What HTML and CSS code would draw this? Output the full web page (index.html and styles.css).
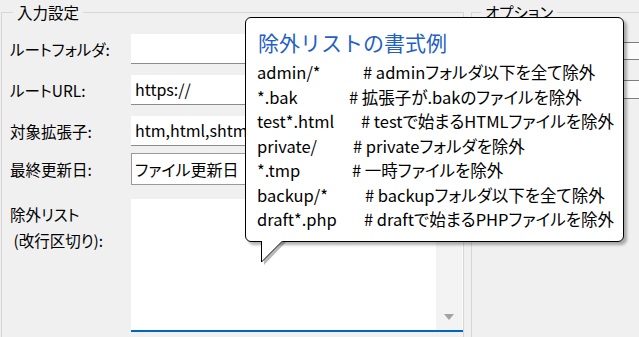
FILE: index.html
```html
<!DOCTYPE html>
<html lang="ja">
<head>
<meta charset="utf-8">
<title>入力設定</title>
<link rel="stylesheet" href="styles.css">
</head>
<body>
<div class="window">
  <fieldset class="group main">
    <legend>入力設定</legend>
    <div class="form">
      <div class="row r1"><div class="label">ルートフォルダ:</div><div class="field"></div></div>
      <div class="row r2"><div class="label">ルートURL:</div><div class="field">https://</div></div>
      <div class="row r3"><div class="label">対象拡張子:</div><div class="field">htm,html,shtml,php</div></div>
      <div class="row r4"><div class="label">最終更新日:</div><div class="combo">ファイル更新日</div></div>
      <div class="row r5">
        <div class="label multi">除外リスト<br>&nbsp;(改行区切り):</div>
        <div class="textarea">
          <div class="ta-body"></div>
          <div class="ta-scroll"><span class="arrow"></span></div>
        </div>
      </div>
    </div>
  </fieldset>
  <fieldset class="group opt">
    <legend>オプション</legend>
    <div class="opt-box first"></div>
    <div class="opt-box"></div>
  </fieldset>

  <div class="tooltip">
    <div class="tip-title">除外リストの書式例</div>
    <div class="tip-line"><span class="code w1">admin/*</span><span># adminフォルダ以下を全て除外</span></div>
    <div class="tip-line"><span class="code w2">*.bak</span><span># 拡張子が.bakのファイルを除外</span></div>
    <div class="tip-line"><span class="code w3">test*.html</span><span># testで始まるHTMLファイルを除外</span></div>
    <div class="tip-line"><span class="code w4">private/</span><span># privateフォルダを除外</span></div>
    <div class="tip-line"><span class="code w5">*.tmp</span><span># 一時ファイルを除外</span></div>
    <div class="tip-line"><span class="code w6">backup/*</span><span># backupフォルダ以下を全て除外</span></div>
    <div class="tip-line"><span class="code w7">draft*.php</span><span># draftで始まるPHPファイルを除外</span></div>
  </div>
  <svg class="tail" width="34" height="28" viewBox="0 0 34 28">
    <polygon points="9,2 31,2 9,25" fill="rgba(0,0,0,0.28)"/>
    <polygon points="6.5,0 29,0 6.5,22.5" fill="#ffffff"/>
    <polyline points="6.5,1 6.5,22 27.5,1" fill="none" stroke="#000" stroke-width="1"/>
  </svg>
</div>
</body>
</html>
```

FILE: styles.css
```css
html, body {
  margin: 0;
  padding: 0;
  background: #f0f0f0;
}

.window {
  position: relative;
  width: 639px;
  height: 337px;
  overflow: hidden;
  display: flex;
  align-items: flex-start;
  background: #f0f0f0;
  font-family: "Noto Sans CJK JP", "Noto Sans", sans-serif;
  font-feature-settings: "palt";
  font-size: 15.5px;
  color: #000;
}

.group {
  box-sizing: border-box;
  margin: 2px 0 0 0;
  border: 1px solid #d6d6d6;
  height: 400px;
  padding: 0;
}

.group legend {
  font-size: 15.5px;
  line-height: 20px;
  padding: 0 4px;
  color: #000;
}

.main {
  margin-left: 1px;
  width: 470px;
  padding: 12px 0 0 8px;
}

.main legend {
  margin-left: 3px;
}

.opt {
  margin-left: 7px;
  width: 200px;
  padding: 0;
}

.opt legend {
  margin-left: 9px;
}

.form {
  display: flex;
  flex-direction: column;
}

.row {
  display: flex;
  align-items: center;
}

.r2, .r3 { margin-top: 11px; }
.r4 { margin-top: 7px; }
.r5 { margin-top: 14px; align-items: flex-start; }

.label {
  width: 121px;
  flex: none;
  white-space: nowrap;
}

.label.multi {
  line-height: 26px;
  padding-top: 2px;
}

.field {
  box-sizing: border-box;
  width: 332px;
  height: 30px;
  background: #fff;
  border-bottom: 1px solid #8c8c8c;
  padding-left: 4px;
  font-size: 16px;
  line-height: 29px;
  white-space: nowrap;
  overflow: hidden;
}

.combo {
  box-sizing: border-box;
  width: 332px;
  height: 32px;
  background: #fff;
  border: 1px solid #9a9a9a;
  padding-left: 3px;
  font-size: 16px;
  line-height: 30px;
  white-space: nowrap;
}

.textarea {
  box-sizing: border-box;
  width: 332px;
  height: 133px;
  display: flex;
  background: #fff;
  border-bottom: 2px solid #0067c0;
}

.ta-body {
  flex: 1;
}

.ta-scroll {
  width: 26px;
  background: #f3f3f3;
  border-right: 1px solid #fbfbfb;
  display: flex;
  align-items: flex-end;
  justify-content: center;
  padding-bottom: 10px;
}

.arrow {
  width: 0;
  height: 0;
  border-left: 5px solid transparent;
  border-right: 5px solid transparent;
  border-top: 6px solid #a3a3a3;
}

.opt-box {
  box-sizing: border-box;
  width: 30px;
  height: 19px;
  margin-left: 147px;
  margin-top: 20px;
  border: 1px solid #7e7e7e;
  border-radius: 4px;
  background: #fbfbfb;
}

.opt-box.first {
  margin-top: 20px;
  height: 18px;
}

.tooltip {
  position: absolute;
  left: 245px;
  top: 17px;
  box-sizing: border-box;
  width: 379px;
  height: 225px;
  background: #fff;
  border: 1px solid #000;
  border-radius: 6px;
  box-shadow: 3px 3px 3px rgba(0, 0, 0, 0.3);
  padding: 11px 0 0 11px;
}

.tip-title {
  font-size: 21px;
  line-height: 26px;
  color: #1f5fc6;
  font-feature-settings: normal;
  margin-bottom: 5px;
  padding-left: 1px;
}

.tip-line {
  font-size: 16.5px;
  line-height: 24.5px;
  white-space: nowrap;
  color: #000;
}

.code { display: inline-block; }
.w1 { width: 106px; }
.w2 { width: 92px; }
.w3 { width: 104px; }
.w4 { width: 96px; }
.w5 { width: 95px; }
.w6 { width: 108px; }
.w7 { width: 107px; }

.tail {
  position: absolute;
  left: 255px;
  top: 240px;
}
```
